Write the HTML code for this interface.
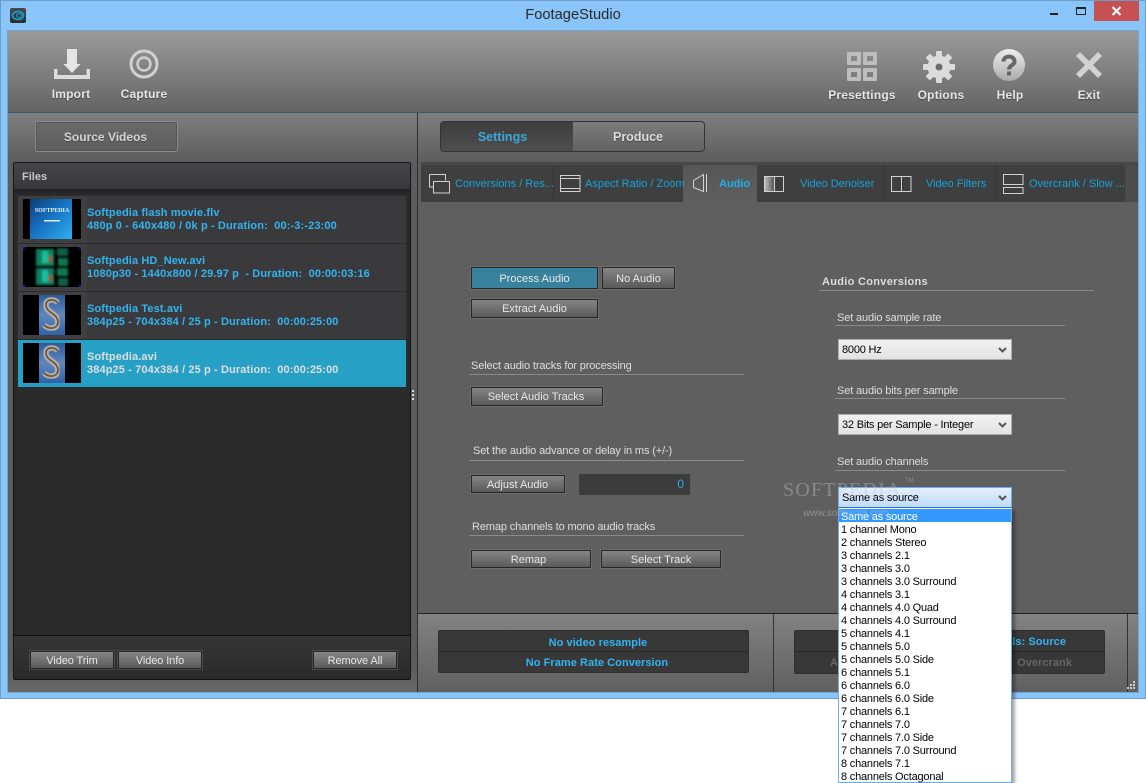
<!DOCTYPE html>
<html><head><meta charset="utf-8"><title>FootageStudio</title>
<style>
html,body{margin:0;padding:0;background:#fff;width:1146px;height:783px;overflow:hidden}
body{position:relative;font-family:"Liberation Sans",sans-serif}
.a,.t,.b,.h{position:absolute;box-sizing:border-box}
.t{white-space:nowrap;line-height:14px;height:14px}
.l{color:#dedede;font-size:11px;letter-spacing:-.13px}
.tb{color:#e6e6e6;font-size:12px;font-weight:bold;letter-spacing:.2px;text-align:center;text-shadow:0 1px 1px #444}
.tab{color:#12a5de;font-size:11px}
.b{background:linear-gradient(#858585,#5a5a5a);border:1px solid #262626;outline:1px solid #6d6d6d;color:#e8e8e8;font-size:11px;text-align:center}
.d{outline-color:#4a4a4a;letter-spacing:-.1px}
.h{height:1px;background:#8a8a8a}
.f{color:#33b4f0;font-size:11px;font-weight:bold;letter-spacing:.12px}
.row{left:18px;width:388px;height:47px;background:#3a3a3c}
.tz{left:0;top:0;width:69px;height:47px;background:#3f3f41}
.th{left:5px;top:3px;width:58px;height:40px;background:#000;overflow:hidden}
.sel{left:838px;width:174px;height:21px;border:1px solid #adadad;background:linear-gradient(#f2f2f2,#e2e2e2);color:#000;font-size:11px;letter-spacing:-.2px;line-height:21px;padding-left:3px}
.sel svg{position:absolute;right:3px;top:7px}
.dd div{height:13px;line-height:17px;padding-left:2px;font-size:11px;letter-spacing:-.2px;color:#000;white-space:nowrap}
.pn{background:#383838;border-radius:2px;border:1px solid #2f2f2f}
.c{color:#33b4f0;font-size:11px;font-weight:bold;letter-spacing:.05px;text-align:center}
svg{display:block}
</style></head><body>

<div class="a" style="left:0;top:0;width:1146px;height:699px;background:#8ac5f9;border:1px solid #6d9dc9"></div>
<div class="a" style="left:10px;top:8px;width:16px;height:15px;background:linear-gradient(#4a4a4a,#2c2c2c);border-radius:2px"></div>
<svg class="a" style="left:10px;top:8px" width="16" height="15"><ellipse cx="8" cy="7.5" rx="5.500" ry="4" fill="none" stroke="#12a0d8" stroke-width="1.600"/><ellipse cx="9" cy="7.5" rx="2.500" ry="2" fill="none" stroke="#12a0d8"/></svg>
<div class="t" style="left:473px;width:200px;top:7px;height:17px;line-height:17px;text-align:center;font-size:14.700px;color:#2a2a2a">FootageStudio</div>
<div class="a" style="left:1050px;top:13px;width:8px;height:2px;background:#222"></div>
<div class="a" style="left:1076px;top:7px;width:10px;height:8px;border:1px solid #222;border-top-width:2px"></div>
<div class="a" style="left:1094px;top:1px;width:45px;height:20px;background:#c75050"></div>
<svg class="a" style="left:1111px;top:6px" width="11" height="10"><path d="M1.500 1 L9.500 9 M9.500 1 L1.500 9" stroke="#fff" stroke-width="2"/></svg>

<!-- main -->
<div class="a" style="left:7px;top:30px;width:1132px;height:663px;border:1px solid #6fa6d6;background:#5f5f5f"></div>
<div class="a" style="left:8px;top:31px;width:1130px;height:81px;background:linear-gradient(#9b9b9b,#646464)"></div>
<div class="a" style="left:8px;top:112px;width:1130px;height:1px;background:#2f5d75"></div>
<div class="a" style="left:8px;top:113px;width:1130px;height:50px;background:linear-gradient(#7f7f7f,#5c5c5c)"></div>
<div class="a" style="left:8px;top:163px;width:409px;height:529px;background:linear-gradient(#5c5c5c 95%,#676767)"></div>
<div class="a" style="left:417px;top:113px;width:1px;height:579px;background:#2e2e2e"></div>

<!-- toolbar icons -->
<svg class="a" style="left:50px;top:45px" width="44" height="38"><path d="M17 4h10v15h3.500L22 28 13.500 19H17z" fill="#e4e4e4"/><path d="M4 24h3.500v6h29v-6h3.500v10H4z" fill="#dcdcdc"/></svg>
<svg class="a" style="left:126px;top:46px" width="36" height="36"><circle cx="18" cy="18" r="13" fill="none" stroke="#d0d0d0" stroke-width="3"/><circle cx="18" cy="18" r="6.500" fill="none" stroke="#d0d0d0" stroke-width="2.500"/></svg>
<div class="t tb" style="left:31px;width:80px;top:87px">Import</div>
<div class="t tb" style="left:104px;width:80px;top:87px">Capture</div>

<svg class="a" style="left:845px;top:50px" width="34" height="33"><g fill="#bdbdbd"><path fill-rule="evenodd" d="M3 2h12a1 1 0 0 1 1 1v11a1 1 0 0 1-1 1H3a1 1 0 0 1-1-1V3a1 1 0 0 1 1-1zM6 6v5h6V6z"/><path fill-rule="evenodd" d="M19 2h12a1 1 0 0 1 1 1v11a1 1 0 0 1-1 1H19a1 1 0 0 1-1-1V3a1 1 0 0 1 1-1zM22 6v5h6V6z"/><path fill-rule="evenodd" d="M3 18h12a1 1 0 0 1 1 1v11a1 1 0 0 1-1 1H3a1 1 0 0 1-1-1V19a1 1 0 0 1 1-1zM6 22v5h6v-5z"/><path fill-rule="evenodd" d="M19 18h12a1 1 0 0 1 1 1v11a1 1 0 0 1-1 1H19a1 1 0 0 1-1-1V19a1 1 0 0 1 1-1zM22 22v5h6v-5z"/></g></svg>
<svg class="a" style="left:922px;top:50px" width="34" height="34"><g transform="translate(17 17)"><circle r="11.500" fill="#dcdcdc"/><g fill="#dcdcdc"><rect x="-3" y="-16" width="6" height="7" rx="1"/><rect x="-3" y="-16" width="6" height="7" rx="1" transform="rotate(45)"/><rect x="-3" y="-16" width="6" height="7" rx="1" transform="rotate(90)"/><rect x="-3" y="-16" width="6" height="7" rx="1" transform="rotate(135)"/><rect x="-3" y="-16" width="6" height="7" rx="1" transform="rotate(180)"/><rect x="-3" y="-16" width="6" height="7" rx="1" transform="rotate(225)"/><rect x="-3" y="-16" width="6" height="7" rx="1" transform="rotate(270)"/><rect x="-3" y="-16" width="6" height="7" rx="1" transform="rotate(315)"/></g><circle r="3.500" fill="#6c6c6c"/></g></svg>
<svg class="a" style="left:992px;top:48px" width="34" height="34"><defs><linearGradient id="g" x1="0" y1="0" x2="0" y2="1"><stop offset="0" stop-color="#eee"/><stop offset="1" stop-color="#aaa"/></linearGradient></defs><circle cx="17" cy="17" r="16" fill="url(#g)"/><path d="M11.500 13.500c0-6.500 11-6.500 11 0 0 4-5.500 3.500-5.500 8" fill="none" stroke="#666" stroke-width="4"/><rect x="15" y="23.500" width="4" height="4" fill="#666"/></svg>
<svg class="a" style="left:1074px;top:50px" width="30" height="30"><path d="M6 2l9 9 9-9 4 4-9 9 9 9-4 4-9-9-9 9-4-4 9-9-9-9z" fill="#d2d2d2"/></svg>
<div class="t tb" style="left:822px;width:80px;top:88px">Presettings</div>
<div class="t tb" style="left:901px;width:80px;top:88px">Options</div>
<div class="t tb" style="left:970px;width:80px;top:88px">Help</div>
<div class="t tb" style="left:1049px;width:80px;top:88px">Exit</div>

<!-- Source Videos -->
<div class="a" style="left:35px;top:121px;width:143px;height:31px;border:1px solid #8c8c8c;border-radius:3px;background:linear-gradient(#6a6a6a,#5e5e5e);box-shadow:inset 0 0 0 1px #555"></div>
<div class="t tb" style="left:35px;width:141px;top:130px;letter-spacing:0;color:#d4d4d4">Source Videos</div>

<!-- Files panel -->
<div class="a" style="left:13px;top:162px;width:398px;height:518px;background:#2b2b2b;border:1px solid #141414;border-radius:2px"></div>
<div class="a" style="left:14px;top:163px;width:396px;height:26px;background:linear-gradient(#454547,#39393b)"></div>
<div class="a" style="left:14px;top:189px;width:396px;height:6px;background:linear-gradient(#1f1f1f,#2b2b2b)"></div>
<div class="t" style="left:22px;top:170px;color:#c8c8c8;font-size:11px;font-weight:bold">Files</div>

<svg width="0" height="0" style="position:absolute"><defs>
<linearGradient id="bl" x1="0" y1="0" x2="1" y2="1"><stop offset="0" stop-color="#0b3f78"/><stop offset=".45" stop-color="#1670c0"/><stop offset="1" stop-color="#2fb0f0"/></linearGradient>
<filter id="bb"><feGaussianBlur stdDeviation="1"/></filter>
<filter id="bs"><feGaussianBlur stdDeviation=".5"/></filter>
<linearGradient id="sb" x1="0" y1="0" x2="0" y2="1"><stop offset="0" stop-color="#2b5a9c"/><stop offset=".5" stop-color="#5f87bd"/><stop offset="1" stop-color="#2f62a8"/></linearGradient>
</defs></svg>

<div class="a row" style="top:196px"><div class="a tz"></div><div class="a th"><svg width="58" height="40"><rect x="7" width="42" height="40" fill="url(#bl)"/><text x="29" y="13" font-size="6" font-weight="bold" font-family="Liberation Serif" fill="#e8f4ff" text-anchor="middle">SOFTPEDIA</text><rect x="21" y="21" width="16" height="1.500" fill="#e0f0ff"/></svg></div></div>
<div class="a row" style="top:244px"><div class="a tz"></div><div class="a th"><svg width="58" height="40"><g filter="url(#bb)"><rect x="13" y="2" width="18" height="17" fill="#0f7f60"/><rect x="13" y="21" width="18" height="17" fill="#0f7f60"/><rect x="19" y="4" width="6" height="12" fill="#18c09a"/><rect x="19" y="23" width="6" height="12" fill="#18c09a"/><rect x="34" y="1" width="11" height="8" fill="#0d5f44"/><rect x="35" y="11" width="10" height="8" fill="#11784f"/><rect x="34" y="21" width="11" height="8" fill="#11784f"/><rect x="35" y="31" width="10" height="8" fill="#0d5f44"/><rect x="26" y="9" width="3" height="6" fill="#a0502a"/><rect x="26" y="28" width="3" height="6" fill="#a0502a"/></g><g fill="#1414d0"><rect width="2" height="2"/><rect x="56" width="2" height="2"/><rect y="38" width="2" height="2"/><rect x="56" y="38" width="2" height="2"/></g></svg></div></div>
<div class="a row" style="top:292px"><div class="a tz"></div><div class="a th"><svg width="58" height="40"><rect x="16" width="26" height="40" fill="url(#sb)"/><g filter="url(#bs)" fill="none"><path d="M35 8C31 3 22 4 23 11c1 7 12 8 12 16 0 7-9 8-14 3" stroke="#e6c9a0" stroke-width="5"/><path d="M35 8C31 3 22 4 23 11c1 7 12 8 12 16 0 7-9 8-14 3" stroke="#26344f" stroke-width="2"/></g></svg></div></div>
<div class="a row" style="top:340px;background:#26a0c4"><div class="a th"><svg width="58" height="40"><rect x="16" width="26" height="40" fill="url(#sb)"/><g filter="url(#bs)" fill="none"><path d="M35 8C31 3 22 4 23 11c1 7 12 8 12 16 0 7-9 8-14 3" stroke="#e6c9a0" stroke-width="5"/><path d="M35 8C31 3 22 4 23 11c1 7 12 8 12 16 0 7-9 8-14 3" stroke="#26344f" stroke-width="2"/></g></svg></div></div>

<div class="t f" style="left:87px;top:206px">Softpedia flash movie.flv</div>
<div class="t f" style="left:87px;top:219px">480p 0 - 640x480 / 0k p - Duration:&nbsp; 00:-3:-23:00</div>
<div class="t f" style="left:87px;top:254px">Softpedia HD_New.avi</div>
<div class="t f" style="left:87px;top:267px">1080p30 - 1440x800 / 29.97 p&nbsp; - Duration:&nbsp; 00:00:03:16</div>
<div class="t f" style="left:87px;top:302px">Softpedia Test.avi</div>
<div class="t f" style="left:87px;top:315px">384p25 - 704x384 / 25 p - Duration:&nbsp; 00:00:25:00</div>
<div class="t f" style="left:87px;top:350px;color:#dedede">Softpedia.avi</div>
<div class="t f" style="left:87px;top:363px;color:#dedede">384p25 - 704x384 / 25 p - Duration:&nbsp; 00:00:25:00</div>

<div class="a" style="left:14px;top:635px;width:396px;height:1px;background:#111"></div>
<div class="a" style="left:14px;top:636px;width:396px;height:43px;background:linear-gradient(#363636,#2a2a2a)"></div>
<div class="b d" style="left:30px;top:651px;width:84px;height:18px;line-height:18px">Video Trim</div>
<div class="b d" style="left:118px;top:651px;width:84px;height:18px;line-height:18px">Video Info</div>
<div class="b d" style="left:313px;top:651px;width:84px;height:18px;line-height:18px">Remove All</div>
<div class="a" style="left:412px;top:390px;width:2px;height:2px;background:#ddd;box-shadow:0 4px #ddd,0 8px #ddd"></div>

<!-- Settings / Produce -->
<div class="a" style="left:440px;top:121px;width:265px;height:31px;border:1px solid #333;border-radius:4px;overflow:hidden;background:linear-gradient(#7c7c7c,#626262)"><div class="a" style="left:0;top:0;width:132px;height:29px;background:linear-gradient(#3d3d3d,#4e4e4e)"></div></div>
<div class="t tb" style="left:441px;width:123px;top:130px;font-size:12.500px;letter-spacing:0;color:#39a9dd;text-shadow:none">Settings</div>
<div class="t tb" style="left:573px;width:130px;top:130px;font-size:12.500px;letter-spacing:0;color:#dcdcdc">Produce</div>

<!-- Tabs -->
<div class="a" style="left:421px;top:162px;width:717px;height:3px;background:#484848"></div>
<div class="a" style="left:421px;top:165px;width:717px;height:37px;background:#3f3f3f"></div>
<div class="a" style="left:553px;top:165px;width:1px;height:37px;background:#363636"></div>
<div class="a" style="left:683px;top:165px;width:74px;height:37px;background:linear-gradient(#565656,#5f5f5f)"></div>
<div class="a" style="left:883px;top:165px;width:1px;height:37px;background:#363636"></div>
<div class="a" style="left:995px;top:165px;width:1px;height:37px;background:#363636"></div>
<div class="a" style="left:1125px;top:165px;width:13px;height:37px;background:#4b4b4b"></div>
<svg class="a" style="left:420px;top:164px" width="720" height="38"><defs><linearGradient id="dz"><stop offset="0" stop-color="#bbb"/><stop offset="1" stop-color="#bbb" stop-opacity=".1"/></linearGradient></defs><rect x="345" y="13" width="10" height="14" fill="url(#dz)"/><g fill="none" stroke="#d2d2d2"><path d="M9.500 10.500h16v6M9.500 10.500v12.500h4M13.500 17.500h16v11.500h-16z"/><path d="M140.500 11.500h19.500v16h-19.500zM140.500 14.500h19.500M140.500 24.500h19.500"/><path d="M283.500 10.500v17l-10-4v-7zM286.500 10v18"/><path d="M344.500 12.500h19v15h-19zM354.500 12.500v15"/><path d="M471.500 12.500h19.500v15h-19.500zM481.500 12.500v15"/><path d="M583.500 10.500h19.500v10h-19.500zM583.500 23.500h19.500v6h-19.500z"/></g></svg>
<div class="t tab" style="left:455px;top:177px">Conversions / Res...</div>
<div class="t tab" style="left:585px;top:177px">Aspect Ratio / Zoom</div>
<div class="t tab" style="left:719px;top:177px;font-weight:bold;color:#18b2ee">Audio</div>
<div class="t tab" style="left:800px;top:177px;letter-spacing:-.05px">Video Denoiser</div>
<div class="t tab" style="left:926px;top:177px;letter-spacing:-.05px">Video Filters</div>
<div class="t tab" style="left:1029px;top:177px">Overcrank / Slow ...</div>

<!-- Audio left -->
<div class="b" style="left:471px;top:267px;width:127px;height:22px;line-height:22px;background:#39829e">Process Audio</div>
<div class="b" style="left:602px;top:267px;width:73px;height:22px;line-height:22px">No Audio</div>
<div class="b" style="left:471px;top:299px;width:127px;height:19px;line-height:18px">Extract Audio</div>
<div class="t l" style="left:471px;top:359px">Select audio tracks for processing</div>
<div class="h" style="left:469px;top:374px;width:275px"></div>
<div class="b" style="left:471px;top:387px;width:132px;height:19px;line-height:18px;padding-right:2px">Select Audio Tracks</div>
<div class="t l" style="left:473px;top:444px">Set the audio advance or delay in ms (+/-)</div>
<div class="h" style="left:469px;top:460px;width:275px"></div>
<div class="b" style="left:471px;top:475px;width:94px;height:18px;line-height:18px;padding-right:1px">Adjust Audio</div>
<div class="a" style="left:579px;top:474px;width:111px;height:21px;background:#3c3c3c;color:#2fa8e8;font-size:12px;line-height:21px;text-align:right;padding-right:6px">0</div>
<div class="t l" style="left:472px;top:520px">Remap channels to mono audio tracks</div>
<div class="h" style="left:469px;top:535px;width:275px"></div>
<div class="b" style="left:471px;top:550px;width:120px;height:18px;line-height:18px;padding-right:5px">Remap</div>
<div class="b" style="left:601px;top:550px;width:120px;height:18px;line-height:18px">Select Track</div>

<!-- Audio right -->
<div class="t" style="left:822px;top:275px;color:#dcdcdc;font-size:11px;font-weight:bold;letter-spacing:.3px">Audio Conversions</div>
<div class="h" style="left:819px;top:290px;width:275px"></div>
<div class="t l" style="left:837px;top:311px">Set audio sample rate</div>
<div class="h" style="left:835px;top:325px;width:230px"></div>
<div class="a sel" style="top:339px">8000 Hz<svg width="10" height="8"><path d="M1 1l3.500 3.500L8 1" fill="none" stroke="#555" stroke-width="2"/></svg></div>
<div class="t l" style="left:837px;top:384px">Set audio bits per sample</div>
<div class="h" style="left:835px;top:398px;width:230px"></div>
<div class="a sel" style="top:414px">32 Bits per Sample - Integer<svg width="10" height="8"><path d="M1 1l3.500 3.500L8 1" fill="none" stroke="#555" stroke-width="2"/></svg></div>
<div class="t l" style="left:837px;top:455px">Set audio channels</div>
<div class="h" style="left:835px;top:470px;width:230px"></div>

<!-- Bottom -->
<div class="a" style="left:418px;top:613px;width:720px;height:1px;background:#222"></div>
<div class="a" style="left:418px;top:614px;width:720px;height:78px;background:linear-gradient(#828282,#606060)"></div>
<div class="a" style="left:773px;top:614px;width:1px;height:78px;background:#333"></div>
<div class="a" style="left:1127px;top:614px;width:1px;height:78px;background:#333"></div>
<div class="a pn" style="left:438px;top:630px;width:311px;height:43px"></div>
<div class="a" style="left:439px;top:651px;width:309px;height:1px;background:#282828"></div>
<div class="t c" style="left:438px;width:320px;top:636px">No video resample</div>
<div class="t c" style="left:438px;width:318px;top:656px">No Frame Rate Conversion</div>
<div class="a pn" style="left:794px;top:630px;width:311px;height:44px"></div>
<div class="a" style="left:795px;top:651px;width:309px;height:1px;background:#282828"></div>
<div class="t c" style="left:1000px;width:66px;top:635px;text-align:right">ls: Source</div>
<div class="t c" style="left:1000px;width:72px;top:656px;text-align:right;color:#666">Overcrank</div>
<div class="t c" style="left:830px;top:656px;color:#666">A</div>
<svg class="a" style="left:1127px;top:681px" width="10" height="10"><g fill="#ccc"><rect x="6" y="0" width="2" height="2"/><rect x="3" y="3" width="2" height="2"/><rect x="6" y="3" width="2" height="2"/><rect x="0" y="6" width="2" height="2"/><rect x="3" y="6" width="2" height="2"/><rect x="6" y="6" width="2" height="2"/></g></svg>

<!-- Dropdown -->
<div class="a sel" style="top:487px;height:21px;border-color:#6aaef0;background:linear-gradient(#e2effc,#c0dcfa)">Same as source<svg width="10" height="8"><path d="M1 1l3.500 3.500L8 1" fill="none" stroke="#555" stroke-width="2"/></svg></div>
<div class="a dd" style="left:838px;top:507px;width:174px;height:276px;background:#fff;border:1px solid #6aaef0;border-top:1px solid #2a6fc0;padding-top:1px;box-shadow:3px 3px 3px rgba(0,0,0,.35)">
<div style="background:#3399ff;color:#fff">Same as source</div>
<div>1 channel Mono</div><div>2 channels Stereo</div><div>3 channels 2.1</div><div>3 channels 3.0</div><div>3 channels 3.0 Surround</div><div>4 channels 3.1</div><div>4 channels 4.0 Quad</div><div>4 channels 4.0 Surround</div><div>5 channels 4.1</div><div>5 channels 5.0</div><div>5 channels 5.0 Side</div><div>6 channels 5.1</div><div>6 channels 6.0</div><div>6 channels 6.0 Side</div><div>7 channels 6.1</div><div>7 channels 7.0</div><div>7 channels 7.0 Side</div><div>7 channels 7.0 Surround</div><div>8 channels 7.1</div><div>8 channels Octagonal</div>
</div>

<!-- Watermark overlay -->
<div class="t" style="left:783px;top:478px;height:24px;line-height:24px;font-family:'Liberation Serif',serif;font-size:20px;color:rgba(200,200,200,.4);letter-spacing:1.200px">SOFTPEDIA</div>
<div class="t" style="left:905px;top:477px;height:8px;line-height:8px;font-size:6px;color:rgba(200,200,200,.4)">TM</div>
<div class="t" style="left:803px;top:507px;color:rgba(200,200,200,.45);font-size:10px">www.softpedia.com</div>
</body></html>
